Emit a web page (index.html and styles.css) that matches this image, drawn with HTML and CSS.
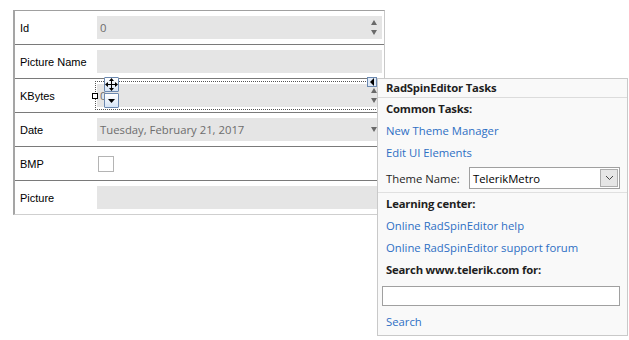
FILE: index.html
```html
<!DOCTYPE html>
<html lang="en">
<head>
  <meta charset="UTF-8" />
  <title>RadSpinEditor Tasks</title>
  <link rel="stylesheet" href="styles.css">
</head>
<body>
  <div class="stage">

    <div class="grid">
      <div class="row">
        <span class="label">Id</span>
        <div class="field spin">
          <span class="value">0</span>
          <span class="arrows"><i class="up"></i><i class="down"></i></span>
        </div>
      </div>
      <div class="row">
        <span class="label">Picture Name</span>
        <div class="field"></div>
      </div>
      <div class="row">
        <span class="label">KBytes</span>
        <div class="field spin">
          <span class="value">0</span>
          <span class="arrows"><i class="up"></i><i class="down"></i></span>
        </div>
      </div>
      <div class="row">
        <span class="label">Date</span>
        <div class="field spin">
          <span class="value">Tuesday, February 21, 2017</span>
          <span class="arrows"><i class="down"></i></span>
        </div>
      </div>
      <div class="row">
        <span class="label">BMP</span>
        <span class="check"></span>
      </div>
      <div class="row">
        <span class="label">Picture</span>
        <div class="field"></div>
      </div>
    </div>

    <!-- designer adornments round the selected KBytes editor -->
    <div class="selection"></div>
    <span class="handle"></span>
    <span class="glyph move">
      <svg width="13" height="13" viewBox="0 0 13 13">
        <path d="M6.5 1v11M1 6.5h11" stroke="#000" stroke-width="1" fill="none"/>
        <path d="M6.5 0L4 3h5zM6.5 13L4 10h5zM0 6.5L3 4v5zM13 6.5L10 4v5z" fill="#000"/>
      </svg>
    </span>
    <span class="glyph drop">
      <svg width="9" height="6" viewBox="0 0 9 6"><path d="M1 1h7L4.5 5z" fill="#000"/></svg>
    </span>
    <span class="smart-tag">
      <svg width="6" height="8" viewBox="0 0 6 8"><path d="M5 0v8L1 4z" fill="#000"/></svg>
    </span>

    <div class="tasks">
      <div class="tasks-title">RadSpinEditor Tasks</div>
      <div class="section">
        <div class="item head">Common Tasks:</div>
        <div class="item link">New Theme Manager</div>
        <div class="item link">Edit UI Elements</div>
        <div class="theme-row">
          <span class="theme-label">Theme Name:</span>
          <div class="combo">
            <span class="combo-text">TelerikMetro</span>
            <span class="combo-btn">
              <svg width="9" height="6" viewBox="0 0 9 6"><path d="M1 1l3.5 3.5L8 1" stroke="#444" fill="none"/></svg>
            </span>
          </div>
        </div>
      </div>
      <div class="section">
        <div class="item head">Learning center:</div>
        <div class="item link">Online RadSpinEditor help</div>
        <div class="item link">Online RadSpinEditor support forum</div>
        <div class="item head">Search www.telerik.com for:</div>
        <div class="search-box"></div>
        <div class="item link search">Search</div>
      </div>
    </div>

  </div>
</body>
</html>
```

FILE: styles.css
```css
body {
  margin: 0;
  background: #fff;
  font-family: "Segoe UI", "Open Sans", sans-serif;
  font-size: 11.3px;
  color: #1e1e1e;
}

.stage {
  position: relative;
  width: 629px;
  height: 340px;
  overflow: hidden;
}

.grid {
  margin: 10px 0 0 13px;
  width: 369px;
  border-top: 1px solid #a0a0a0;
  border-left: 2px solid #a5a5a5;
  border-right: 1px solid #c8c8c8;
  border-bottom: 1px solid #cfcfcf;
}

.row {
  display: flex;
  align-items: center;
  height: 33px;
  border-bottom: 1px solid #7a7a7a;
  background: #fff;
}

.row:last-child {
  border-bottom: none;
}

.label {
  width: 77px;
  padding-left: 5px;
  font-family: "Liberation Sans", Arial, sans-serif;
  font-size: 11px;
  color: #000;
}

.field {
  width: 285px;
  height: 23px;
  background: #e5e5e5;
  display: flex;
  align-items: center;
}

.value {
  flex: 1;
  padding-left: 3px;
  color: #6d6d6d;
}

.arrows {
  width: 12px;
  margin-right: 2px;
  display: flex;
  flex-direction: column;
  align-items: center;
  gap: 5px;
}

.arrows i {
  width: 0;
  height: 0;
  border-left: 3px solid transparent;
  border-right: 3px solid transparent;
}

.arrows .up {
  border-bottom: 5px solid #6a6a6a;
}

.arrows .down {
  border-top: 5px solid #6a6a6a;
}

.check {
  width: 14px;
  height: 14px;
  margin-left: 1px;
  border: 1px solid #b4b4b4;
  background: #fff;
}

/* adornments */
.selection {
  position: absolute;
  left: 95px;
  top: 81px;
  width: 281px;
  height: 27px;
  border: 1px dotted #555;
}

.handle {
  position: absolute;
  left: 92px;
  top: 93px;
  width: 4px;
  height: 4px;
  border: 1px solid #000;
  background: #fff;
}

.glyph {
  position: absolute;
  left: 104px;
  width: 13px;
  height: 13px;
  border: 1px solid #6c89b0;
  border-radius: 1px;
  background: linear-gradient(#ffffff, #d6e4f5);
  display: flex;
  align-items: center;
  justify-content: center;
}

.glyph.move {
  top: 77px;
}

.glyph.drop {
  top: 93px;
}

.smart-tag {
  position: absolute;
  left: 367px;
  top: 77px;
  width: 8px;
  height: 8px;
  border: 1px solid #6c89b0;
  background: #dfe9f6;
  display: flex;
  align-items: center;
  justify-content: center;
}

/* smart tag panel */
.tasks {
  position: absolute;
  left: 377px;
  top: 78px;
  width: 249px;
  height: 256px;
  border: 1px solid #c9c9c9;
  background: #f9f9f9;
}

.tasks-title {
  height: 18px;
  line-height: 18px;
  padding-left: 8px;
  font-weight: bold;
  letter-spacing: -0.2px;
  border-bottom: 1px solid #dcdcdc;
}

.section + .section {
  border-top: 1px solid #e0e0e0;
}

.item {
  height: 22px;
  line-height: 22px;
  padding-left: 8px;
}

.item.head {
  font-weight: bold;
  letter-spacing: -0.2px;
}

.item.link {
  color: #2e6fc4;
}

.theme-row {
  height: 28px;
  display: flex;
  align-items: center;
  padding-left: 8px;
}

.theme-label {
  width: 83px;
}

.combo {
  width: 149px;
  height: 20px;
  border: 1px solid #a0a0a0;
  background: #fff;
  display: flex;
  align-items: center;
}

.combo-text {
  flex: 1;
  padding-left: 3px;
  color: #000;
}

.combo-btn {
  width: 16px;
  height: 16px;
  margin-right: 1px;
  border: 1px solid #adadad;
  background: #e6e6e6;
  display: flex;
  align-items: center;
  justify-content: center;
}

.search-box {
  margin: 5px 0 0 4px;
  width: 236px;
  height: 18px;
  border: 1px solid #a0a0a0;
  background: #fff;
}

.item.search {
  margin-top: 5px;
}
```
